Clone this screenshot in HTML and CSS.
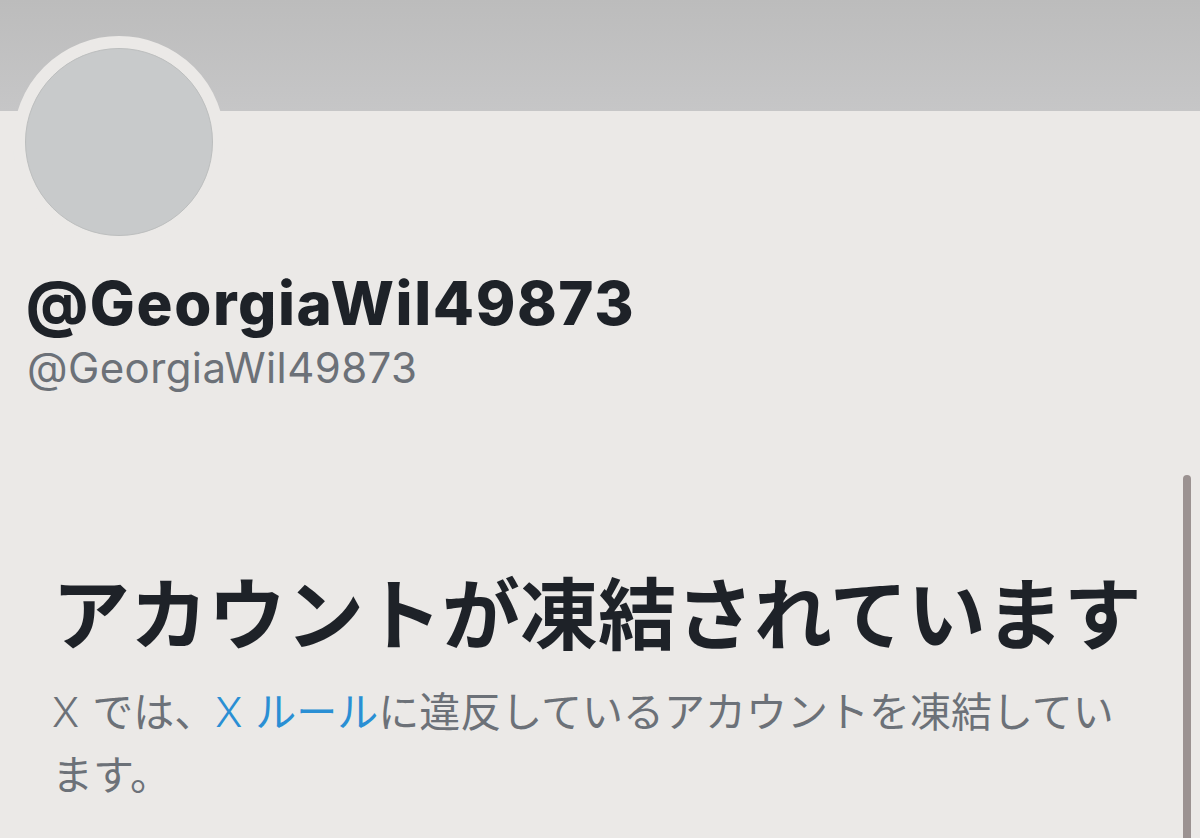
FILE: index.html
```html
<!DOCTYPE html>
<html lang="ja">
<head>
<meta charset="utf-8">
<title>@GeorgiaWil49873</title>
<link rel="stylesheet" href="styles.css">
</head>
<body>
<div class="page">
  <div class="banner"></div>
  <div class="profile">
    <div class="avatar"><div class="avatar-inner"></div></div>
    <div class="name">@GeorgiaWil49873</div>
    <div class="handle">@GeorgiaWil49873</div>
  </div>
  <div class="notice">
    <h1 class="title">アカウントが凍結されています</h1>
    <p class="desc"><span class="x">X</span>では、<a class="link" href="#"><span class="x">X</span>ルール</a>に違反しているアカウントを凍結しています。</p>
  </div>
  <div class="scrollbar"></div>
</div>
</body>
</html>
```
FILE: styles.css
```css
html, body {
  margin: 0;
  padding: 0;
  background: #ebe9e7;
}
.page {
  width: 1200px;
  height: 838px;
  overflow: hidden;
  background: #ebe9e7;
  font-family: Inter, "Noto Sans CJK JP", sans-serif;
}
.banner {
  height: 111px;
  background: linear-gradient(to bottom, #bcbcbc, #c6c6c7);
}
.profile {
  padding-left: 13px;
}
.avatar {
  width: 188px;
  height: 188px;
  margin-top: -75px;
  border: 12px solid #ebe9e7;
  border-radius: 50%;
  background: #ebe9e7;
  position: relative;
}
.avatar-inner {
  width: 186px;
  height: 186px;
  border-radius: 50%;
  background: #c8cacb;
  border: 1px solid #bcbebe;
}
.name {
  margin: 19px 0 0 13px;
  font-size: 60px;
  line-height: 72px;
  font-weight: 800;
  color: #1e2228;
  letter-spacing: 1.6px;
}
.handle {
  margin: 4px 0 0 14px;
  font-size: 42px;
  line-height: 50px;
  font-weight: 400;
  color: #6c7178;
  letter-spacing: 0.4px;
}
.notice {
  padding: 0 54px 0 52px;
  font-family: "Noto Sans CJK JP", sans-serif;
}
.title {
  margin: 170px 0 0 0;
  font-size: 78px;
  line-height: 94px;
  font-weight: 700;
  color: #1e2228;
  white-space: nowrap;
}
.desc {
  margin: 22px 0 0 0;
  font-size: 41px;
  line-height: 60px;
  font-weight: 400;
  color: #6c7178;
}
.x {
  padding-right: 13px;
  font-family: Inter, sans-serif;
  font-weight: 300;
}
.link {
  color: #2a8fd4;
  text-decoration: none;
}
.scrollbar {
  position: absolute;
  left: 1183px;
  top: 475px;
  width: 8px;
  height: 400px;
  border-radius: 4px;
  background: #9b9291;
}
```
